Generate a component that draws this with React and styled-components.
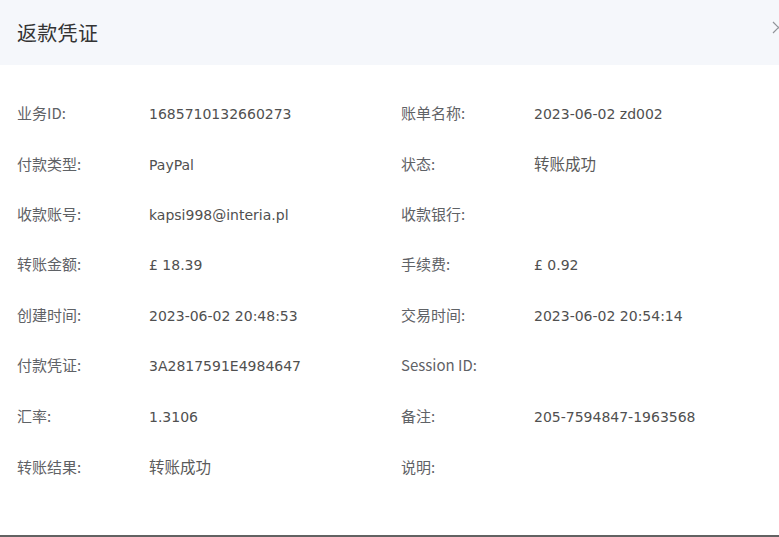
import React from "react";
import styled, { createGlobalStyle } from "styled-components";

const Global = createGlobalStyle`
  html, body { margin: 0; padding: 0; background: #fff; }
  body { font-family: "DejaVu Sans", "Noto Sans CJK SC", sans-serif; }
`;

const Dialog = styled.div`
  width: 779px;
  height: 537px;
  box-sizing: border-box;
  background: #fff;
  border-bottom: 2px solid #626262;
  overflow: hidden;
  display: flex;
  flex-direction: column;
`;

const Header = styled.div`
  position: relative;
  height: 65px;
  flex: none;
  background: #f5f7fb;
  display: flex;
  align-items: center;
  padding-left: 17px;
`;

const Title = styled.h2`
  margin: 0;
  font-family: "Noto Sans CJK SC", sans-serif;
  font-weight: 400;
  font-size: 20px;
  color: #333;
  letter-spacing: 0.3px;
`;

const Close = styled.span`
  position: absolute;
  right: -6px;
  top: 19px;
  width: 13px;
  height: 13px;
`;

const Body = styled.div`
  display: grid;
  grid-template-columns: 132px 252px 133px 1fr;
  grid-auto-rows: 50.57px;
  align-items: baseline;
  padding: 36.5px 0 0 17px;
`;

const Label = styled.div`
  font-family: "Noto Sans CJK SC", "DejaVu Sans", sans-serif;
  font-size: 15px;
  color: #5f6266;
  white-space: nowrap;
`;

const Value = styled.div`
  font-family: ${(p) => (p.$cjk ? `"Noto Sans CJK SC", sans-serif` : `"DejaVu Sans", "Noto Sans CJK SC", sans-serif`)};
  font-size: ${(p) => (p.$cjk ? "15.5px" : "14px")};
  color: ${(p) => (p.$cjk ? "#5a5a5a" : "#505050")};
  white-space: nowrap;
`;

const rows = [
  ["业务ID:", "1685710132660273", "账单名称:", "2023-06-02 zd002"],
  ["付款类型:", "PayPal", "状态:", "转账成功"],
  ["收款账号:", "kapsi998@interia.pl", "收款银行:", ""],
  ["转账金额:", "£ 18.39", "手续费:", "£ 0.92"],
  ["创建时间:", "2023-06-02 20:48:53", "交易时间:", "2023-06-02 20:54:14"],
  ["付款凭证:", "3A2817591E4984647", "Session ID:", ""],
  ["汇率:", "1.3106", "备注:", "205-7594847-1963568"],
  ["转账结果:", "转账成功", "说明:", ""],
];

const isCjk = (s) => /[\u4e00-\u9fff]/.test(s);

export default function App() {
  return (
    <>
      <Global />
      <Dialog>
        <Header>
          <Title>返款凭证</Title>
          <Close>
            <svg width="13" height="13" viewBox="0 0 13 13">
              <path d="M1 1 L12 12 M12 1 L1 12" stroke="#909399" strokeWidth="1.2" fill="none" />
            </svg>
          </Close>
        </Header>
        <Body>
          {rows.map((r, i) => (
            <React.Fragment key={i}>
              <Label>{r[0]}</Label>
              <Value $cjk={isCjk(r[1])}>{r[1]}</Value>
              <Label>{r[2]}</Label>
              <Value $cjk={isCjk(r[3])}>{r[3]}</Value>
            </React.Fragment>
          ))}
        </Body>
      </Dialog>
    </>
  );
}
